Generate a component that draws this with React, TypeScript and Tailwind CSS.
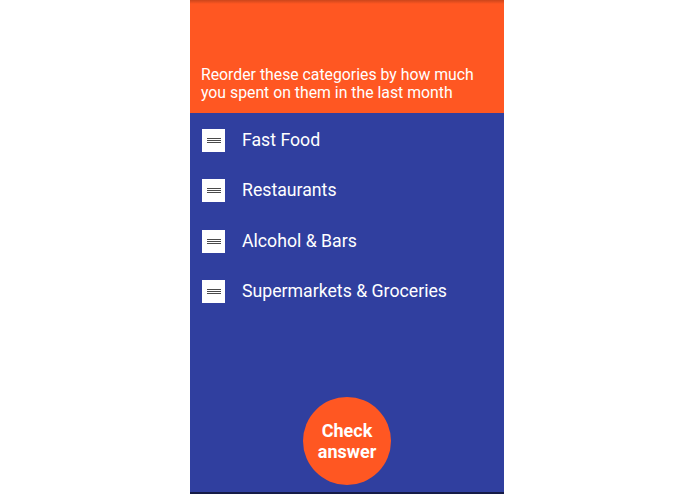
const categories = ['Fast Food', 'Restaurants', 'Alcohol & Bars', 'Supermarkets & Groceries'];

// Drag handle: white square with three grey bars
const Handle = () => (
  <div className="w-[23px] h-[23px] shrink-0 bg-white flex flex-col items-center justify-center gap-px">
    <div className="h-px w-[14px] bg-[#4a4a4a]" />
    <div className="h-px w-[14px] bg-[#4a4a4a]" />
    <div className="h-px w-[14px] bg-[#4a4a4a]" />
  </div>
);

export default function App() {
  return (
    <div className="w-full h-[494px] bg-white flex pl-[190px] overflow-hidden" style={{ fontFamily: 'Roboto, "Liberation Sans", sans-serif' }}>
      <div className="w-[314px] h-full flex flex-col">
        {/* Header */}
        <header className="h-[113px] shrink-0 bg-[#FF5722] flex flex-col">
          <div className="h-[4px] bg-gradient-to-b from-black/20 to-transparent" />
          <p className="mt-auto px-[11px] pb-[11px] text-white text-[15.8px] leading-[18px]">
            Reorder these categories by how much you spent on them in the last month
          </p>
        </header>

        {/* Sortable list */}
        <main className="flex-1 bg-[#303F9F] flex flex-col pt-[2px]">
          {categories.map((c) => (
            <div key={c} className="h-[50.5px] flex items-center pl-[12px]">
              <Handle />
              <span className="ml-[17px] text-white text-[17.7px]">{c}</span>
            </div>
          ))}
          <div className="mt-auto mb-[7px] flex justify-center">
            <button
              type="button"
              className="w-[88px] h-[88px] rounded-full bg-[#FF5722] text-white font-bold text-[18px] leading-[21px] flex items-center justify-center"
            >
              Check
              <br />
              answer
            </button>
          </div>
        </main>
        <div className="h-[2px] bg-[#161b47]" />
      </div>
    </div>
  );
}
